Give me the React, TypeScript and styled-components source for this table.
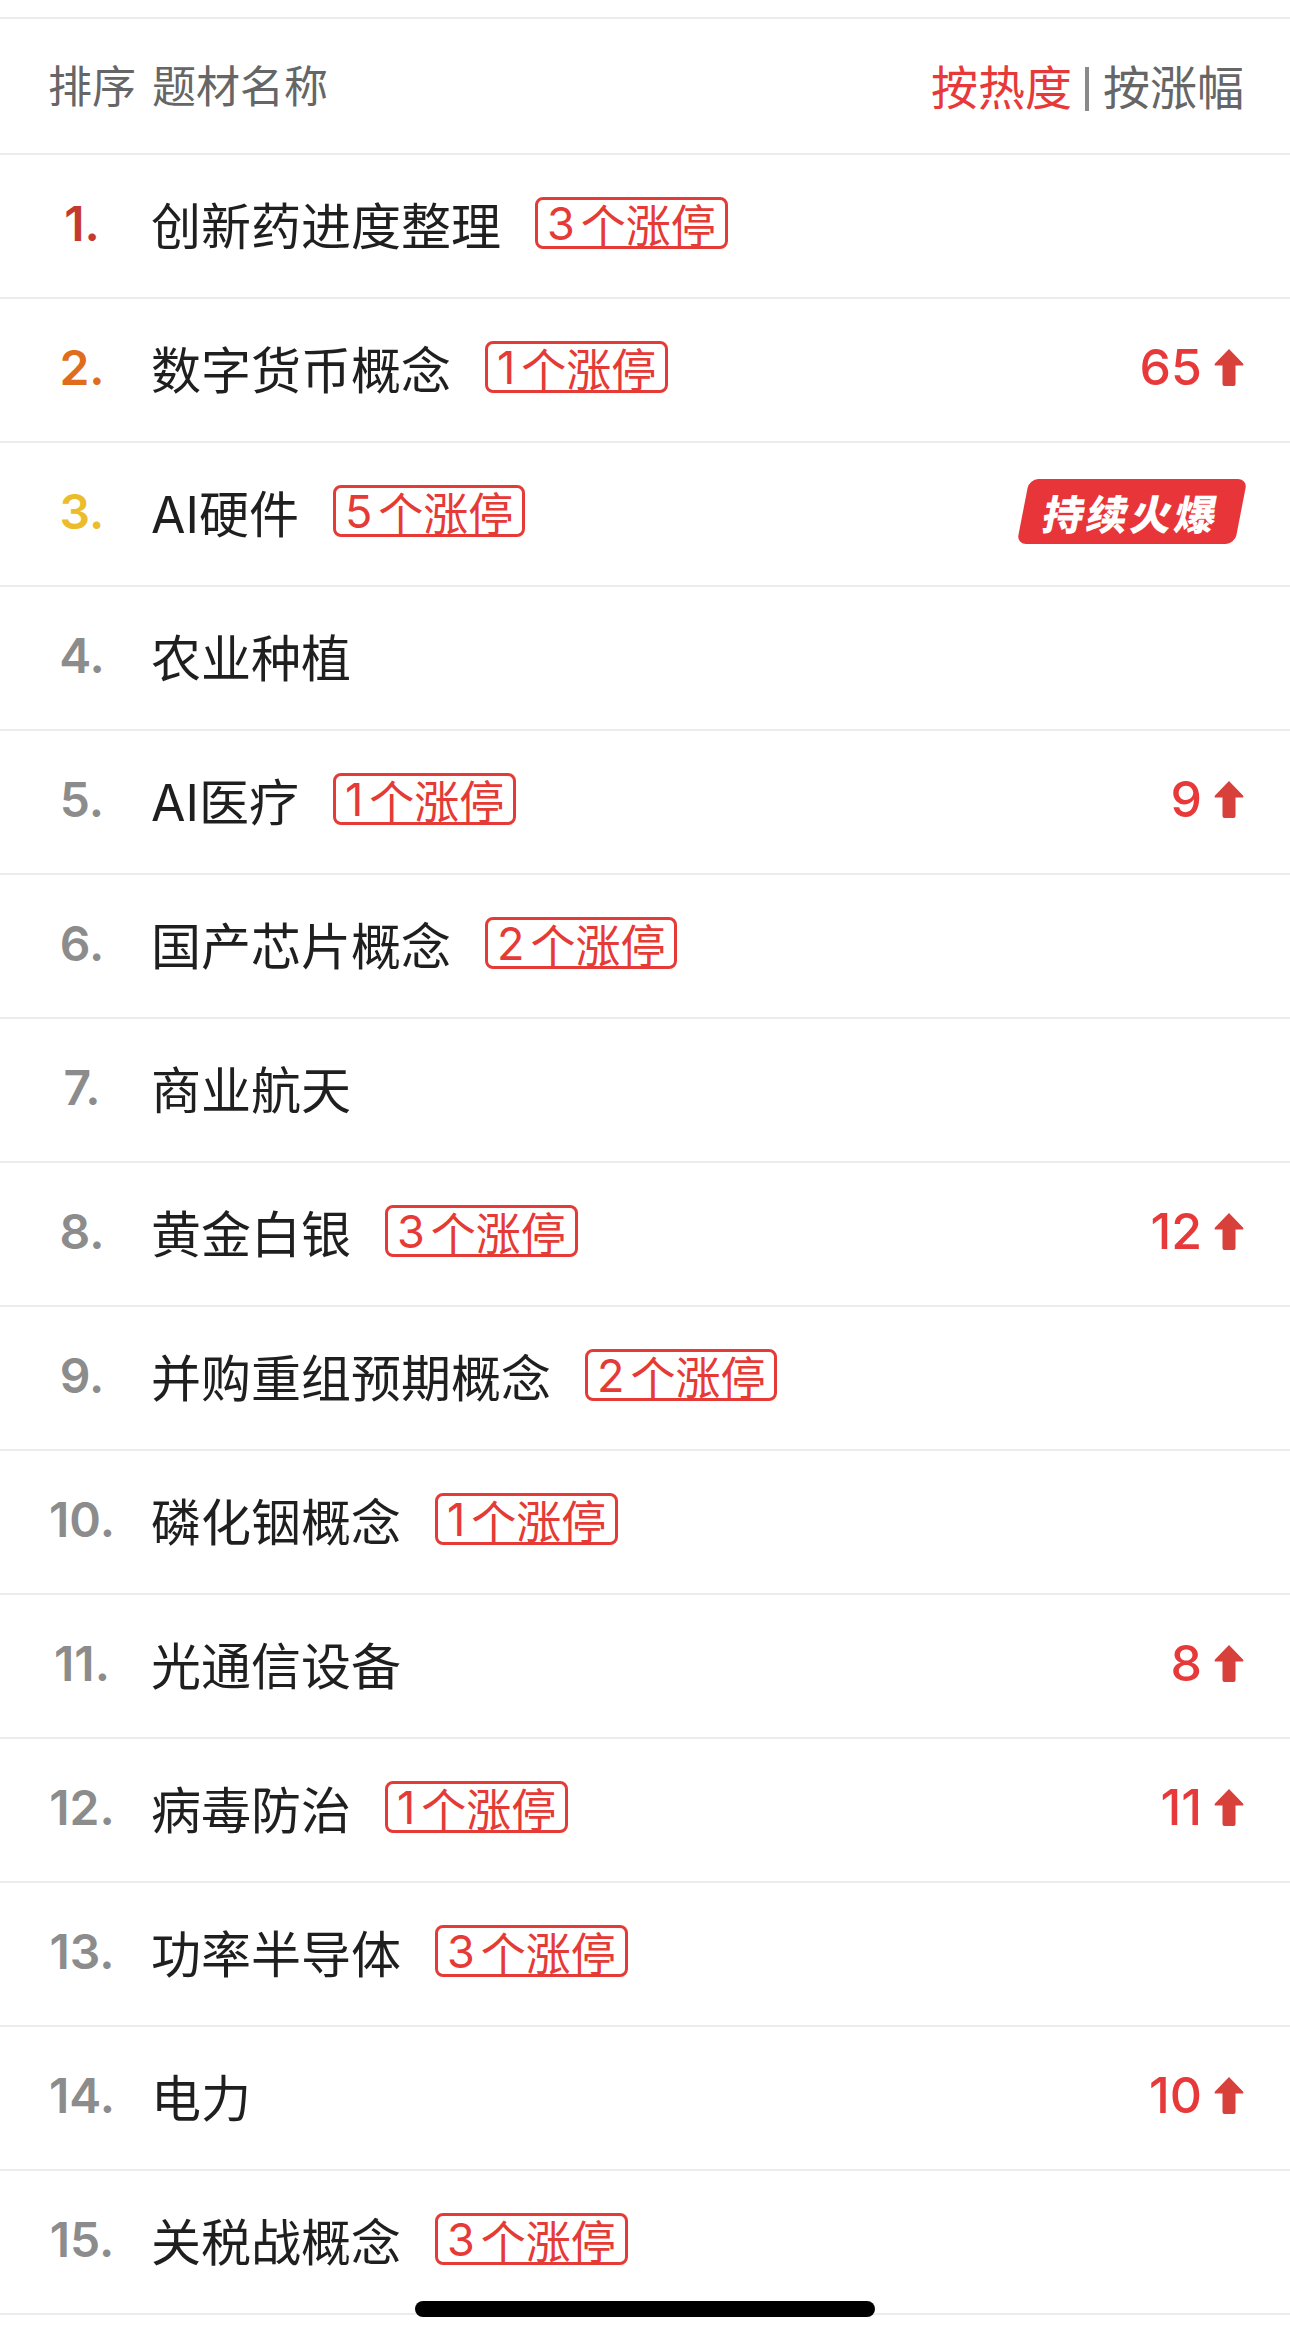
import styled, { createGlobalStyle } from "styled-components";

const GlobalStyle = createGlobalStyle`
  html, body {
    margin: 0;
    padding: 0;
    background: #ffffff;
  }
  body {
    font-family: "Inter", "Noto Sans CJK SC", sans-serif;
    -webkit-font-smoothing: antialiased;
  }
`;

const Page = styled.div`
  width: 1290px;
  min-height: 2341px;
  position: relative;
  background: #fff;
  padding-top: 17px;
  box-sizing: border-box;
  overflow: hidden;
`;

const Header = styled.div`
  height: 138px;
  box-sizing: border-box;
  display: flex;
  align-items: center;
  justify-content: space-between;
  padding: 0 46px 4px 48px;
  border-top: 2px solid #ececec;
  border-bottom: 2px solid #ececec;
`;

const HeaderLeft = styled.div`
  display: flex;
  gap: 16px;
  font-size: 44px;
  color: #666666;
  font-family: "Noto Sans CJK SC", sans-serif;
`;

const SortSwitch = styled.div`
  display: flex;
  align-items: center;
  font-size: 47px;
  font-family: "Noto Sans CJK SC", sans-serif;
`;

const SortOption = styled.span<{ $active?: boolean }>`
  color: ${(p) => (p.$active ? "#e8393a" : "#666666")};
`;

// the bar between the two sort options
const Divider = styled.span`
  width: 4px;
  height: 44px;
  margin: 10px 14px 0 13px;
  background: #8a8a8a;
`;

const Row = styled.div`
  height: 144px;
  box-sizing: border-box;
  display: flex;
  align-items: center;
  border-bottom: 2px solid #ececec;
  padding: 0 46px 6px 0;
`;

const Rank = styled.div<{ $color: string }>`
  width: 151px;
  padding-left: 13px;
  box-sizing: border-box;
  text-align: center;
  font-family: "Inter", sans-serif;
  font-weight: 600;
  font-size: 48px;
  color: ${(p) => p.$color};
  flex-shrink: 0;
`;

const Name = styled.div`
  font-size: 50px;
  color: #1f1f1f;
  font-family: "Inter", "Noto Sans CJK SC", sans-serif;
  white-space: nowrap;
`;

const Tag = styled.div`
  margin-left: 34px;
  height: 52px;
  box-sizing: border-box;
  display: flex;
  align-items: center;
  padding: 0 9px;
  border: 3px solid #e53a36;
  border-radius: 8px;
  color: #e53a36;
  font-size: 45px;
  line-height: 1;
  font-family: "Noto Sans CJK SC", sans-serif;
  white-space: nowrap;

  > .count {
    font-family: "Inter", sans-serif;
    margin-right: 6px;
  }
`;

const Spacer = styled.div`
  flex: 1;
`;

const Rise = styled.div`
  display: flex;
  align-items: center;
  gap: 12px;
  color: #e8393a;
  font-size: 50px;
  font-family: "Inter", sans-serif;
  font-weight: 500;
`;

const HotBadge = styled.div`
  width: 218px;
  height: 65px;
  margin-right: 3px;
  background: #e8353a;
  border-radius: 9px;
  transform: skewX(-11deg);
  display: flex;
  align-items: center;
  justify-content: center;
  color: #fff;
  font-size: 41px;
  font-weight: 900;
  letter-spacing: 3px;
  font-family: "Noto Sans CJK SC", sans-serif;
`;

const HomeIndicator = styled.div`
  position: absolute;
  left: 415px;
  top: 2301px;
  width: 460px;
  height: 16px;
  border-radius: 8px;
  background: #000;
`;

const ArrowUp = () => (
  <svg width="30" height="38" viewBox="0 0 30 38">
    <path
      d="M15 1 L29 15.5 Q30.2 17.5 28 17.5 L21.5 17.5 L21.5 36 Q21.5 38 19.5 38 L10.5 38 Q8.5 38 8.5 36 L8.5 17.5 L2 17.5 Q-0.2 17.5 1 15.5 Z"
      fill="#d8403b"
    />
  </svg>
);

type Topic = {
  name: string;
  limitUp?: number;
  rise?: number;
  hot?: boolean;
};

const topics: Topic[] = [
  { name: "创新药进度整理", limitUp: 3 },
  { name: "数字货币概念", limitUp: 1, rise: 65 },
  { name: "AI硬件", limitUp: 5, hot: true },
  { name: "农业种植" },
  { name: "AI医疗", limitUp: 1, rise: 9 },
  { name: "国产芯片概念", limitUp: 2 },
  { name: "商业航天" },
  { name: "黄金白银", limitUp: 3, rise: 12 },
  { name: "并购重组预期概念", limitUp: 2 },
  { name: "磷化铟概念", limitUp: 1 },
  { name: "光通信设备", rise: 8 },
  { name: "病毒防治", limitUp: 1, rise: 11 },
  { name: "功率半导体", limitUp: 3 },
  { name: "电力", rise: 10 },
  { name: "关税战概念", limitUp: 3 },
];

// top three get their own colour
const rankColor = (i: number) => {
  if (i === 0) return "#c53a2f";
  if (i === 1) return "#e06d1e";
  if (i === 2) return "#ecbd2b";
  return "#8c8c8c";
};

export default function App() {
  return (
    <Page>
      <GlobalStyle />
      <Header>
        <HeaderLeft>
          <span>排序</span>
          <span>题材名称</span>
        </HeaderLeft>
        <SortSwitch>
          <SortOption $active>按热度</SortOption>
          <Divider />
          <SortOption>按涨幅</SortOption>
        </SortSwitch>
      </Header>
      {topics.map((t, i) => (
        <Row key={t.name}>
          <Rank $color={rankColor(i)}>{i + 1}.</Rank>
          <Name>{t.name}</Name>
          {t.limitUp && (
            <Tag>
              <span className='count'>{t.limitUp}</span>个涨停
            </Tag>
          )}
          <Spacer />
          {t.rise !== undefined && (
            <Rise>
              {t.rise}
              <ArrowUp />
            </Rise>
          )}
          {t.hot && <HotBadge>持续火爆</HotBadge>}
        </Row>
      ))}
      <HomeIndicator />
    </Page>
  );
}
